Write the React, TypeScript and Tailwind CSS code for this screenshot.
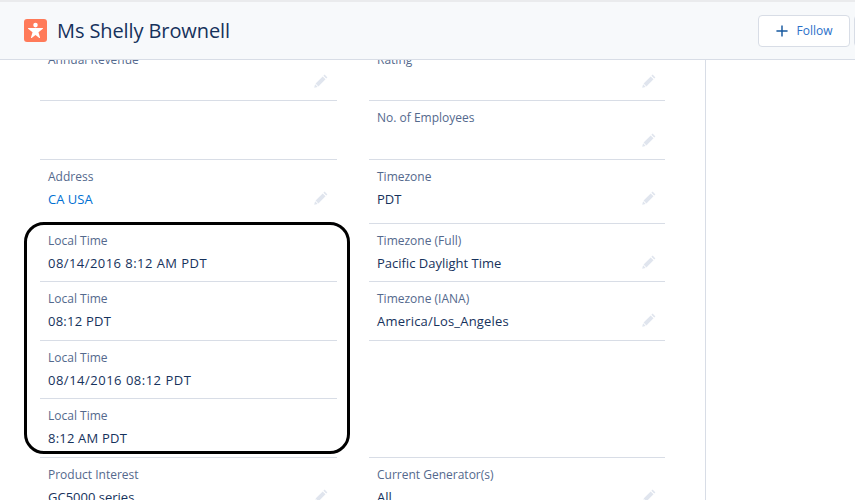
import React from "react";

function Pencil({ top }: { top: string }) {
  return (
    <svg viewBox="0 0 14 14" className={`w-[14px] h-[14px] absolute right-[9px] text-[#e0e5ee] ${top}`} fill="currentColor">
      <path d="M10.6 0.6 13.4 3.4 12.2 4.6 9.4 1.8Z" />
      <path d="M8.7 2.5 11.5 5.3 4.4 12.4 1.6 9.6Z" />
      <path d="M1.1 10.3 3.7 12.9 0.2 13.8Z" />
    </svg>
  );
}

type FieldProps = {
  label?: string;
  value?: string;
  h: string;
  link?: boolean;
  edit?: boolean;
  track?: string;
  pad?: string;
  pencilTop?: string;
};

function Field({ label, value, h, link, edit = true, track = "", pad = "pt-[8px]", pencilTop = "top-[31px]" }: FieldProps) {
  return (
    <div className={`relative border-b border-[#d8dde6] px-2 ${pad} ${h}`}>
      {label && <div className="text-[12px] leading-[18px] text-[#54698d]">{label}</div>}
      {value && (
        <div className={`text-[13px] leading-[20px] mt-[3px] ${link ? "text-[#0070d2]" : "text-[#16325c]"} ${track}`}>{value}</div>
      )}
      {edit && <Pencil top={pencilTop} />}
    </div>
  );
}

function PersonIcon() {
  return (
    <div className="w-[23px] h-[23px] rounded-[3px] bg-[#ff7a59] flex items-center justify-center">
      <svg viewBox="0 0 24 24" className="w-[17px] h-[17px]" fill="#ffffff">
        <circle cx="12" cy="4.4" r="3.2" />
        <path d="M2 8.6h20c.6 0 .8.7.4 1.1l-6.2 4.6 2.2 7.5c.2.6-.5 1.1-1 .7L12 18.4l-5.4 4.1c-.5.4-1.2-.1-1-.7l2.2-7.5-6.2-4.6c-.4-.4-.2-1.1.4-1.1z" />
      </svg>
    </div>
  );
}

export default function App() {
  return (
    <div className="relative w-[855px] h-[500px] overflow-hidden bg-white font-['Open_Sans','Liberation_Sans',sans-serif]">
      <header className="h-[60px] bg-[#f7f9fb] border-b border-[#d8dde6] border-t-[2px] border-t-[#eaebed] flex items-center pl-[24px] overflow-hidden">
        <PersonIcon />
        <h1 className="ml-[10px] text-[20px] leading-[28px] text-[#16325c] tracking-[-0.1px]">Ms Shelly Brownell</h1>
        <div className="ml-auto flex items-center gap-[4px] -mr-[9px] mt-[1px]">
          <button className="w-[92px] h-[32px] rounded-[4px] bg-white border border-[#d8dde6] flex items-center justify-center gap-[9px] text-[12px] text-[#2a6fc9]">
            <svg viewBox="0 0 14 14" className="w-[12px] h-[12px]" stroke="#16589f" strokeWidth="1.7" fill="none">
              <path d="M7 0.5v13M0.5 7h13" />
            </svg>
            Follow
          </button>
          <div className="w-[10px] h-[32px] rounded-l-[4px] bg-white border border-[#d8dde6]" />
        </div>
      </header>

      <main className="h-[440px] overflow-hidden flex">
        <div className="w-[706px] shrink-0 border-r border-[#d8dde6] pl-[40px] overflow-hidden">
          <div className="flex gap-[32px] -mt-[18px]">
            <div className="w-[297px]">
              <Field label="Annual Revenue" h="h-[59px]" pad="pt-[9px]" pencilTop="top-[32px]" />
              <Field h="h-[59px]" edit={false} />
              <Field label="Address" value="CA USA" link h="h-[64px]" />
              <Field label="Local Time" value="08/14/2016 8:12 AM PDT" h="h-[58px]" edit={false} track="tracking-[0.45px]" />
              <Field label="Local Time" value="08:12 PDT" h="h-[59px]" edit={false} track="tracking-[0.25px]" />
              <Field label="Local Time" value="08/14/2016 08:12 PDT" h="h-[58px]" edit={false} track="tracking-[0.5px]" />
              <Field label="Local Time" value="8:12 AM PDT" h="h-[59px]" edit={false} track="tracking-[0.2px]" />
              <Field label="Product Interest" value="GC5000 series" h="h-[64px]" />
            </div>
            <div className="w-[296px]">
              <Field label="Rating" h="h-[59px]" pad="pt-[9px]" pencilTop="top-[32px]" />
              <Field label="No. of Employees" h="h-[59px]" pencilTop="top-[32px]" />
              <Field label="Timezone" value="PDT" h="h-[64px]" />
              <Field label="Timezone (Full)" value="Pacific Daylight Time" h="h-[58px]" />
              <Field label="Timezone (IANA)" value="America/Los_Angeles" h="h-[59px]" track="tracking-[0.2px]" />
              <div className="h-[117px] border-b border-[#d8dde6]" />
              <Field label="Current Generator(s)" value="All" h="h-[64px]" />
            </div>
          </div>
        </div>
      </main>

      <div className="absolute left-[24px] top-[222px] w-[326px] h-[232px] rounded-[20px] border-[3px] border-black" />
    </div>
  );
}
